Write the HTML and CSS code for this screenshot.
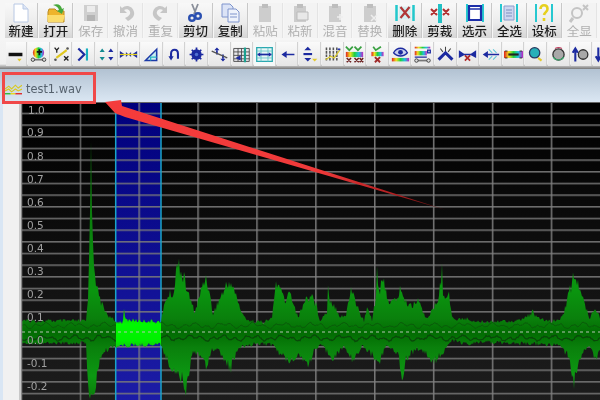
FILE: index.html
```html
<!DOCTYPE html>
<html lang="zh">
<head>
<meta charset="utf-8">
<title>test1.wav</title>
<link rel="stylesheet" href="styles.css">
</head>
<body>
<div class="app">
  <div class="toolbar-main">
    <div class="tool"><svg class="ico" viewBox="0 0 24 20"><path d="M5 1h9l5 5v13H5z" fill="#fff" stroke="#b8c8e4"/><path d="M14 1v5h5" fill="#dde6f6" stroke="#b8c8e4"/></svg><span>新建</span></div>
    <div class="tool"><svg class="ico" viewBox="0 0 24 20"><path d="M4 9l1-3h6l2 2h7v11H4z" fill="#eeb42c" stroke="#b98a20"/><path d="M3 12h18l-2 7H4z" fill="#fbdc6c"/><path d="M9 2c5-2 8 0 9 4l2-1-2 6-5-3 2-1c-1-3-3-4-6-5z" fill="#46a83c"/></svg><span>打开</span></div>
    <div class="tool off"><svg class="ico" viewBox="0 0 24 20"><path d="M5 2h14v16H5z" fill="#cfcfcf"/><path d="M8 3h8v6H8z" fill="#ececec"/><path d="M8 12h8v6H8z" fill="#b4b4b4"/></svg><span>保存</span></div>
    <div class="tool off"><svg class="ico" viewBox="0 0 24 20"><path d="M6 3v7h7L10 7c4-2 7 1 6 4-1 2-3 3-5 4l3 3c4-2 7-5 6-9-1-6-8-8-12-4z" fill="#c6c6c6"/></svg><span>撤消</span></div>
    <div class="tool off"><svg class="ico" viewBox="0 0 24 20"><path d="M18 3v7h-7l3-3c-4-2-7 1-6 4 1 2 3 3 5 4l-3 3c-4-2-7-5-6-9 1-6 8-8 12-4z" fill="#c6c6c6"/></svg><span>重复</span></div>
    <div class="tool"><svg class="ico" viewBox="0 0 24 20"><path d="M9 1l4 10M15 1l-4 10" stroke="#8a8f9a" stroke-width="1.800"/><circle cx="9" cy="15" r="2.800" fill="none" stroke="#2a4fb0" stroke-width="2.400"/><circle cx="15" cy="13" r="2.800" fill="none" stroke="#2a4fb0" stroke-width="2.400"/></svg><span>剪切</span></div>
    <div class="tool"><svg class="ico" viewBox="0 0 24 20"><path d="M4 1h8l3 3v10H4z" fill="#dbe3f6" stroke="#7e94cc"/><path d="M10 6h8l3 3v10H10z" fill="#eef2fb" stroke="#7e94cc"/><path d="M12 11h7M12 14h7" stroke="#7e94cc"/></svg><span>复制</span></div>
    <div class="tool off"><svg class="ico" viewBox="0 0 24 20"><path d="M6 3h12v16H6z" fill="#cdcdcd"/><path d="M9 1h6v4H9z" fill="#bdbdbd"/></svg><span>粘贴</span></div>
    <div class="tool off"><svg class="ico" viewBox="0 0 24 20"><path d="M6 3h12v16H6z" fill="#cdcdcd"/><path d="M9 1h6v4H9z" fill="#bdbdbd"/><path d="M9 9h11v8H9z" fill="#e8e8e8" stroke="#bbb"/></svg><span>粘新</span></div>
    <div class="tool off"><svg class="ico" viewBox="0 0 24 20"><path d="M6 3h12v16H6z" fill="#cdcdcd"/><path d="M9 1h6v4H9z" fill="#bdbdbd"/><path d="M14 14h6M17 11v6" stroke="#eee" stroke-width="1.5"/></svg><span>混音</span></div>
    <div class="tool off"><svg class="ico" viewBox="0 0 24 20"><path d="M6 3h12v16H6z" fill="#cdcdcd"/><path d="M9 1h6v4H9z" fill="#bdbdbd"/><path d="M13 12l6 6M19 12l-6 6" stroke="#eee" stroke-width="1.5"/></svg><span>替换</span></div>
    <div class="tool"><svg class="ico" viewBox="0 0 24 20"><path d="M3.500 2v16M20.500 2v16" stroke="#22c8cc" stroke-width="2.500"/><path d="M6 3c3 1 9 1 12 0v14c-3-1-9-1-12 0z" fill="#d4f0f2"/><path d="M7.500 4l9 11M16.500 4l-9 11" stroke="#b03838" stroke-width="2.200"/></svg><span>删除</span></div>
    <div class="tool"><svg class="ico" viewBox="0 0 24 20"><path d="M12 1v19" stroke="#22c0c4" stroke-width="4"/><path d="M3 6l6 6M9 6l-6 6M15 6l6 6M21 6l-6 6" stroke="#b03030" stroke-width="2"/></svg><span>剪裁</span></div>
    <div class="tool"><svg class="ico" viewBox="0 0 24 20"><path d="M4 1v18M20 1v18" stroke="#26c8d0" stroke-width="2"/><path d="M6 3h12v14H6z" fill="#fff" stroke="#1c2ea8" stroke-width="2.200"/><path d="M6 6h12" stroke="#1c2ea8" stroke-width="1.500"/></svg><span>选示</span></div>
    <div class="tool"><svg class="ico" viewBox="0 0 24 20"><path d="M4 1v18M20 1v18" stroke="#26c8d0" stroke-width="2"/><path d="M7 3h10v14H7z" fill="#cdd6f0" stroke="#8c9ccc"/><path d="M9 7h6M9 10h6M9 13h6" stroke="#7f8fc0"/></svg><span>全选</span></div>
    <div class="tool"><svg class="ico" viewBox="0 0 24 20"><path d="M4 1v18M20 1v18" stroke="#26c8d0" stroke-width="2"/><path d="M8.500 6c0-5 7-5 7 0 0 3-3 3-3.500 6M12 15v3" fill="none" stroke="#e6d01e" stroke-width="2.600"/></svg><span>设标</span></div>
    <div class="tool off"><svg class="ico" viewBox="0 0 24 20"><circle cx="10" cy="10" r="5" fill="none" stroke="#c4c4c4" stroke-width="2"/><path d="M6 15l-3 4" stroke="#c4c4c4" stroke-width="3"/><path d="M16 2l5 5M21 2l-5 5" stroke="#c4c4c4" stroke-width="2"/></svg><span>全显</span></div>
  </div>

  <div class="toolbar-mini">
    <div class="mini"><svg viewBox="0 0 22 22"><path d="M3 9h16v4H3z" fill="#111"/><path d="M13 16h5l-2.500 3z" fill="#e2c82a"/></svg></div>
    <div class="mini"><svg viewBox="0 0 22 22"><circle cx="11" cy="9" r="6.500" fill="url(#rainbow)"/><path d="M12 5v7M9 8h6" stroke="#111" stroke-width="2"/><path d="M4 17h14" stroke="#777" stroke-width="2"/><circle cx="4.500" cy="17" r="2" fill="#ddd" stroke="#333"/><circle cx="17.500" cy="17" r="2" fill="#ddd" stroke="#333"/></svg></div>
    <div class="mini"><svg viewBox="0 0 22 22"><path d="M5 15L17 6" stroke="#e0c820" stroke-width="2.500"/><path d="M3 3l2.500 3L8 3M5.500 6v3M14 13l5 5M19 13l-5 5" fill="none" stroke="#222" stroke-width="1.500"/><circle cx="4" cy="17" r="1.500" fill="#555"/><circle cx="18" cy="4" r="1.500" fill="#555"/></svg></div>
    <div class="mini"><svg viewBox="0 0 22 22"><path d="M5 4l7 7-7 7" fill="none" stroke="#1c2aa0" stroke-width="2.500"/><path d="M15 4v14" stroke="#18b0c0" stroke-width="2.500"/></svg></div>
    <div class="mini"><svg viewBox="0 0 22 22"><path d="M6 4l3 4H3zM6 18l-3-4h6z" fill="#128a90"/><path d="M16 4l3 4h-6zM16 18l-3-4h6z" fill="#1c2aa0"/></svg></div>
    <div class="mini"><svg viewBox="0 0 22 22"><path d="M1 7l6 4-6 4zM21 7l-6 4 6 4zM8 8l3 3 3-3v6l-3-3-3 3z" fill="#1c2aa0"/><path d="M1 11h20" stroke="#e4d020" stroke-width="1.500"/></svg></div>
    <div class="mini"><svg viewBox="0 0 22 22"><path d="M4 18L17 5v13z" fill="#c8eef0" stroke="#1c3aa8" stroke-width="1.800"/><path d="M10 18v-4h7" fill="none" stroke="#26b8c4" stroke-width="1.500"/></svg></div>
    <div class="mini"><svg viewBox="0 0 22 22"><path d="M7 16v-6c0-6 8-6 8 0v6" fill="none" stroke="#1c2aa0" stroke-width="2.400"/><path d="M4 13l3 5 3-5z" fill="#1c2aa0"/></svg></div>
    <div class="mini"><svg viewBox="0 0 22 22"><circle cx="11" cy="11" r="6" fill="#1c2aa0"/><path d="M11 3v16M3 11h16M5.500 5.500l11 11M16.500 5.500l-11 11" stroke="#1c2aa0" stroke-width="2"/><circle cx="11" cy="11" r="2" fill="#5070d0"/></svg></div>
    <div class="mini"><svg viewBox="0 0 22 22"><path d="M8 3l3 3H5zM15 19l-3-3h6z" fill="#1c2aa0"/><path d="M8 6v5M15 11v5" stroke="#1c2aa0" stroke-width="2"/><path d="M2 7l18 8" stroke="#555" stroke-width="1.500"/></svg></div>
    <div class="mini"><svg viewBox="0 0 22 22"><path d="M2 4h18v15H2z" fill="#e8e8ec" stroke="#444"/><path d="M2 8h18M2 12h18M2 16h18M7 4v15M11 4v15" stroke="#444"/><path d="M15 3v17" stroke="#18a090" stroke-width="2.500"/><path d="M4 15l6-3v6z" fill="#1c2aa0"/></svg></div>
    <div class="mini selected"><svg viewBox="0 0 22 22"><path d="M2 3h18v16H2z" fill="#e6f6f6" stroke="#28a8b0" stroke-width="1.500"/><path d="M7 3v16M15 3v16M2 7h18M2 15h18" stroke="#68c4c8"/><path d="M3 11h16" stroke="#1c2aa0" stroke-width="2"/><path d="M3 11l3-2.500v5zM19 11l-3-2.500v5z" fill="#1c2aa0"/></svg></div>
    <div class="mini"><svg viewBox="0 0 22 22"><path d="M4 11l6-4v3h9v2h-9v3z" fill="#1c2aa0"/></svg></div>
    <div class="mini"><svg viewBox="0 0 22 22"><path d="M9 2l4 4H5zM9 19l-4-4h8z" fill="#1c2aa0"/><path d="M4 10.500h10" stroke="#1c2aa0" stroke-width="2.500"/><path d="M14 16h6l-3 3z" fill="#e2c82a"/></svg></div>
    <div class="mini"><svg viewBox="0 0 22 22"><path d="M4 3v16M8 3v16M12 3v16M16 3v16" stroke="#555" stroke-width="1.800" stroke-dasharray="3 1"/><path d="M3 17l6-4 4 2 7-10" fill="none" stroke="#d8c830" stroke-width="1.500"/><path d="M17 5h3" stroke="#2a3ab0" stroke-width="2"/></svg></div>
    <div class="mini"><svg viewBox="0 0 22 22"><path d="M1 8h20v6H1z" fill="url(#rainbow)"/><path d="M1 2l4 4 4-4M11 2l4 4 4-4" fill="none" stroke="#38a040" stroke-width="2"/><path d="M2 15l5 5M7 15l-5 5M11 15l5 5M16 15l-5 5M17 15l4 5M21 15l-4 5" stroke="#6c2020" stroke-width="1.800"/></svg></div>
    <div class="mini"><svg viewBox="0 0 22 22"><path d="M4 8h14v5H4z" fill="url(#rainbow)"/><path d="M6 2l3 4 6-4" fill="none" stroke="#38a040" stroke-width="2"/><path d="M8 14l6 6M14 14l-6 6" stroke="#a02828" stroke-width="2.200"/></svg></div>
    <div class="mini"><svg viewBox="0 0 22 22"><path d="M3 9c4-7 12-7 16 0-4 5-12 5-16 0z" fill="#c8d0ee" stroke="#1c2aa0" stroke-width="1.500"/><circle cx="11" cy="8.500" r="2.800" fill="#1c2aa0"/><path d="M1 15h20v4H1z" fill="url(#rainbow)"/></svg></div>
    <div class="mini"><svg viewBox="0 0 22 22"><path d="M2 2h18v2H2z" fill="url(#rainbow)"/><path d="M2 7h14v5H2z" fill="url(#rainbow)"/><path d="M17 6h3v3h-3zM2 14h14" fill="none" stroke="#1c2aa0" stroke-width="1.500"/><path d="M4 18h14" stroke="#777" stroke-width="2"/><circle cx="4" cy="18" r="2" fill="#ddd" stroke="#333"/><circle cx="18" cy="18" r="2" fill="#ddd" stroke="#333"/></svg></div>
    <div class="mini"><svg viewBox="0 0 22 22"><path d="M3 17l8-8 8 8" fill="none" stroke="#1c2aa0" stroke-width="3.500"/><path d="M5 4l3 4M11 2v5M17 4l-3 4" stroke="#444" stroke-width="1.200"/></svg></div>
    <div class="mini"><svg viewBox="0 0 22 22"><path d="M1 6l6 4h8l6-4v9l-6-3H7l-6 3z" fill="#1c2aa0"/><path d="M8 12l6 6M14 12l-6 6" stroke="#b02828" stroke-width="2"/></svg></div>
    <div class="mini"><svg viewBox="0 0 22 22"><path d="M2 11l6-4v3h13v2H8v3z" fill="#1c2aa0"/><path d="M9 5l4 4M9 17l4-4M14 5l4 4M14 17l4-4" stroke="#60c8d8" stroke-width="1.200"/></svg></div>
    <div class="mini"><svg viewBox="0 0 22 22"><path d="M0 7h22v8H0z" fill="url(#rainbow)"/><path d="M5 11h12" stroke="#222" stroke-width="2.500"/><path d="M1 7h3M18 7h3M1 15h3M18 15h3" stroke="#222"/></svg></div>
    <div class="mini"><svg viewBox="0 0 22 22"><circle cx="10" cy="9" r="6" fill="#28b0b8" stroke="#2a3a60" stroke-width="1.500"/><path d="M14 15l4 3" stroke="#e2c82a" stroke-width="2.500"/></svg></div>
    <div class="mini"><svg viewBox="0 0 22 22"><circle cx="11" cy="11" r="6.500" fill="#a8a8a8" stroke="#333" stroke-width="1.500"/><path d="M5 14a7 7 0 0 0 12 0" fill="none" stroke="#38b070" stroke-width="1.200"/><path d="M7 4a8 8 0 0 1 8 0" fill="none" stroke="#c04060" stroke-width="1.200"/></svg></div>
    <div class="mini"><svg viewBox="0 0 22 22"><path d="M5 19V6M2 9l3-5 3 5" fill="none" stroke="#1c2aa0" stroke-width="2.400"/><circle cx="14" cy="11" r="5.500" fill="#a8a8a8" stroke="#333" stroke-width="1.500"/></svg></div>
    <div class="mini"><svg viewBox="0 0 22 22"><path d="M5 3v13M2 13l3 5 3-5" fill="none" stroke="#1c2aa0" stroke-width="2.400"/><circle cx="14" cy="11" r="5.500" fill="#a8a8a8" stroke="#333" stroke-width="1.500"/></svg></div>
  </div>

  <div class="tabstrip">
    <svg class="tab-icon" viewBox="0 0 18 12"><path d="M0 6l4-3 3 3 4-4 3 3 4-3M0 8l4-2 3 3 4-3 3 2 4-2" fill="none" stroke="#d8c820" stroke-width="1.200"/><path d="M0 11h6" stroke="#38b838" stroke-width="1.500"/><path d="M6 11h5" stroke="#e8d820" stroke-width="1.500"/><path d="M11 11h7" stroke="#e03030" stroke-width="1.500"/></svg>
    <span class="tab-name">test1.wav</span>
  </div>

  <div class="workspace">
    <div class="gutter"></div>
    <svg class="plot" viewBox="21 102 579 298" width="579" height="298">
      <defs>
        <linearGradient id="rainbow" x1="0" y1="0" x2="1" y2="0">
          <stop offset="0" stop-color="#e02020"/><stop offset=".25" stop-color="#f0e020"/><stop offset=".5" stop-color="#20d040"/><stop offset=".75" stop-color="#20c0e0"/><stop offset="1" stop-color="#c020c0"/>
        </linearGradient>
        <linearGradient id="plotBg" gradientUnits="userSpaceOnUse" x1="0" y1="102" x2="0" y2="400">
          <stop offset="0" stop-color="#000"/><stop offset="1" stop-color="#1d1d1d"/>
        </linearGradient>
        <linearGradient id="selBg" gradientUnits="userSpaceOnUse" x1="0" y1="102" x2="0" y2="400">
          <stop offset="0" stop-color="#00007c"/><stop offset="1" stop-color="#1c1ca6"/>
        </linearGradient>
        <linearGradient id="waveFill" gradientUnits="userSpaceOnUse" x1="0" y1="160" x2="0" y2="400">
          <stop offset="0" stop-color="#0a6a0a"/><stop offset=".54" stop-color="#0a960f"/><stop offset=".66" stop-color="#0a800c"/><stop offset=".72" stop-color="#026c02"/><stop offset=".78" stop-color="#0a800c"/><stop offset=".9" stop-color="#0c9812"/><stop offset="1" stop-color="#0a7a0a"/>
        </linearGradient>
        <linearGradient id="waveBright" gradientUnits="userSpaceOnUse" x1="0" y1="312" x2="0" y2="352">
          <stop offset="0" stop-color="#18b018"/><stop offset=".3" stop-color="#00f800"/><stop offset=".7" stop-color="#00f000"/><stop offset="1" stop-color="#18b018"/>
        </linearGradient>
        <pattern id="gridH" patternUnits="userSpaceOnUse" x="0" y="101" width="10" height="11.67"><path d="M0 .8h10" stroke="#7a7a7a" stroke-width="1.400"/></pattern>
        <pattern id="gridV" patternUnits="userSpaceOnUse" x="79.500" y="0" width="58.900" height="10"><path d="M.8 0v10" stroke="#7f7f7f" stroke-width="1.400"/></pattern>
        <clipPath id="selClip"><rect x="116" y="102" width="45" height="298"/></clipPath>
      </defs>
      <rect x="21" y="102" width="579" height="298" fill="url(#plotBg)"/>
      <rect x="115.500" y="102" width="45.500" height="298" fill="url(#selBg)"/>
      <rect x="21" y="102" width="579" height="298" fill="url(#gridH)"/>
      <rect x="79.500" y="102" width="521" height="298" fill="url(#gridV)"/>
      <path d="M115.700 102v298M161 102v298" stroke="#1aa4c8" stroke-width="1.500"/>
      <path id="wave" fill="url(#waveFill)"/>
      <path id="waveCore" fill="none" stroke="#0a470a" stroke-width="1.200"/>
      <path id="waveCoreTop" fill="none" stroke="#0a5c0a" stroke-width="1"/>
      <path id="waveSel" fill="url(#waveBright)" clip-path="url(#selClip)"/>
      <path d="M22 332H600" stroke="#b4c4b4" stroke-width="1" stroke-dasharray="3 3"/>
      <path d="M22 102h578" stroke="#666" stroke-width="2"/>
      <path d="M21.500 102v298" stroke="#888" stroke-width="1.500"/>
      <g class="axis">
        <text x="28" y="114">1.0</text><text x="27" y="136">0.9</text><text x="27" y="160">0.8</text><text x="27" y="183">0.7</text><text x="27" y="206">0.6</text><text x="27" y="229">0.5</text><text x="27" y="252">0.4</text><text x="27" y="275">0.3</text><text x="27" y="298">0.2</text><text x="27" y="321">0.1</text><text x="27" y="344">0.0</text><text x="27" y="367">-0.1</text><text x="27" y="390">-0.2</text>
      </g>
    </svg>
  </div>

  <div class="callout-box"></div>
  <svg class="callout-arrow" viewBox="0 0 600 400" width="600" height="400">
    <defs><linearGradient id="arrowFill" gradientUnits="userSpaceOnUse" x1="105" y1="0" x2="446" y2="0"><stop offset="0" stop-color="#f53c3c"/><stop offset=".62" stop-color="#f03a3a"/><stop offset=".85" stop-color="#b01e20"/><stop offset="1" stop-color="#501010"/></linearGradient></defs>
    <path d="M105 102L121 100L122 106L446 210L125 117L115 113Z" fill="url(#arrowFill)"/>
  </svg>
</div>
<script src="script.js"></script>
</body>
</html>
```
FILE: styles.css
```css
html, body {
  margin: 0;
  padding: 0;
  width: 600px;
  height: 400px;
  overflow: hidden;
  background: #f0f0f0;
}
.app {
  position: relative;
  width: 600px;
  height: 400px;
  overflow: hidden;
  display: flex;
  flex-direction: column;
  font-family: "Noto Sans CJK SC", "Liberation Sans", sans-serif;
}
.toolbar-main {
  height: 40px;
  box-sizing: border-box;
  padding: 3px 0 2px 4.500px;
  display: flex;
  background: #f6f6f6;
  filter: blur(.6px);
}
.tool {
  flex: none;
  width: 33.900px;
  margin-right: 1px;
  height: 35px;
  display: flex;
  flex-direction: column;
  align-items: center;
  background: linear-gradient(#f8f8f8, #ececec 55%, #d6d6d6);
  border-right: 1px solid #c8c8c8;
  box-sizing: border-box;
  color: #1c1c1c;
  font-size: 12.500px;
  font-weight: 500;
  line-height: 15px;
}
.tool .ico {
  width: 24px;
  height: 20px;
  flex: none;
}
.tool.off {
  background: #f3f3f3;
  border-right-color: #e4e4e4;
  color: #b0b0b0;
  font-weight: 400;
}
.toolbar-mini {
  height: 29px;
  box-sizing: border-box;
  padding: 2px 0 0 5.700px;
  display: flex;
  background: linear-gradient(#f4f4f4 0, #f0f0f0 24px, #bbb 26px, #777 29px);
  filter: blur(.6px);
}
.mini {
  flex: none;
  width: 21.600px;
  margin-right: 1px;
  height: 24px;
  box-sizing: border-box;
  background: linear-gradient(#fafafa, #e6e6e6);
  border-right: 1px solid #d2d2d2;
  display: flex;
  align-items: center;
  justify-content: center;
}
.mini svg {
  width: 19px;
  height: 19px;
  flex: none;
}
.mini.selected {
  background: #f4f8f8;
}
.tabstrip {
  height: 33px;
  box-sizing: border-box;
  padding: 6px 0 0 5px;
  display: flex;
  align-items: center;
  gap: 4px;
  background: linear-gradient(#b2c2d2, #dbe7f3);
  filter: blur(.4px);
}
.tab-icon {
  width: 17px;
  height: 12px;
}
.tab-name {
  font-family: "DejaVu Sans", sans-serif;
  font-size: 11.400px;
  color: #56626e;
}
.workspace {
  display: flex;
  flex: 1;
  min-height: 0;
}
.gutter {
  flex: none;
  width: 21px;
  box-sizing: border-box;
  background: #f1f1f1;
  border-left: 3px solid #d9e6f4;
  border-right: 2px solid #c8c8c8;
}
.plot {
  flex: none;
  display: block;
  filter: blur(.5px);
}
.axis text {
  font-family: "DejaVu Sans", sans-serif;
  font-size: 10.500px;
  fill: #a0a0a0;
}
.callout-box {
  position: absolute;
  left: 2px;
  top: 72px;
  width: 88px;
  height: 26px;
  border: 3px solid #f04848;
  filter: blur(.4px);
}
.callout-arrow {
  position: absolute;
  left: 0;
  top: 0;
  filter: blur(.4px);
}
```
FILE: script.js
```js
// Waveform envelope: [x, y] points of the loudness curve, above and below the 0.0 line at y=332.
var upper = [[22,321],[86,321],[88,300],[90,200],[91,160],[92,210],[94,260],[97,290],[102,305],[108,315],[113,320],[116,322],[123,322],[124,312],[126,320],[161,322],[163,312],[166,298],[170,295],[174,292],[178,257],[181,272],[186,285],[190,300],[195,312],[200,295],[204,280],[207,278],[210,297],[213,314],[220,298],[228,284],[231,282],[236,296],[243,316],[250,321],[265,322],[272,318],[276,282],[280,290],[286,302],[290,290],[294,305],[298,318],[305,300],[312,295],[316,305],[320,320],[327,312],[328,283],[330,300],[336,308],[340,316],[346,316],[351,288],[354,296],[360,314],[364,321],[368,306],[372,320],[376,296],[377,268],[379,290],[384,284],[390,304],[396,300],[401,288],[405,302],[412,306],[418,298],[425,318],[432,312],[438,300],[442,272],[443,292],[449,296],[452,315],[456,321],[462,318],[480,322],[500,321],[518,321],[528,316],[533,312],[540,320],[555,321],[563,316],[567,300],[572,284],[573,276],[577,282],[583,300],[590,318],[595,306],[600,318]];
var lower = [[22,343],[86,343],[88,380],[90,398],[92,402],[95,400],[97,370],[102,354],[112,346],[161,344],[164,352],[169,365],[176,370],[181,378],[184,382],[186,390],[188,376],[193,350],[200,354],[206,366],[212,348],[220,352],[227,364],[231,368],[236,352],[245,346],[258,343],[274,345],[279,354],[286,358],[292,360],[297,354],[303,358],[308,366],[314,350],[322,346],[330,354],[334,358],[344,346],[350,356],[352,360],[362,346],[374,356],[378,364],[386,346],[398,352],[401,370],[403,382],[405,360],[412,352],[420,348],[428,356],[431,362],[438,358],[446,348],[452,340],[466,344],[490,342],[530,344],[560,345],[567,354],[571,370],[574,382],[578,366],[584,352],[590,346],[596,360],[600,352]];

function interpolate(points, x) {
  for (var i = 1; i < points.length; i++) {
    if (x <= points[i][0]) {
      var a = points[i - 1], b = points[i];
      return a[1] + (b[1] - a[1]) * (x - a[0]) / (b[0] - a[0]);
    }
  }
  return points[points.length - 1][1];
}
function noise(x, scale) {
  var n = Math.sin(x * 12.9898) * 43758.5453;
  return (n - Math.floor(n) - 0.5) * scale;
}
function wiggle(x, seed) {
  return Math.sin(x * 0.55 + seed) * 1.4 + Math.sin(x * 0.21 + seed * 2) * 1.6;
}

var top_ = [], bottom = [], core = [], coreTop = [];
for (var x = 22; x <= 600; x++) {
  var u = interpolate(upper, x), l = interpolate(lower, x);
  top_.push(x + " " + (u + noise(x, Math.max(4, (332 - u) * 0.3))).toFixed(1));
  bottom.unshift(x + " " + (l + noise(x + 300, Math.max(4, (l - 332) * 0.35))).toFixed(1));
  core.push(x + " " + (338 + wiggle(x, 1) + noise(x + 700, 1.5)).toFixed(1));
  coreTop.push(x + " " + (325.500 + wiggle(x, 4) + noise(x + 900, 1.5)).toFixed(1));
}
var outline = "M" + top_.join("L") + "L" + bottom.join("L") + "Z";
document.getElementById("wave").setAttribute("d", outline);
document.getElementById("waveSel").setAttribute("d", outline);
document.getElementById("waveCore").setAttribute("d", "M" + core.join("L"));
document.getElementById("waveCoreTop").setAttribute("d", "M" + coreTop.join("L"));
```
